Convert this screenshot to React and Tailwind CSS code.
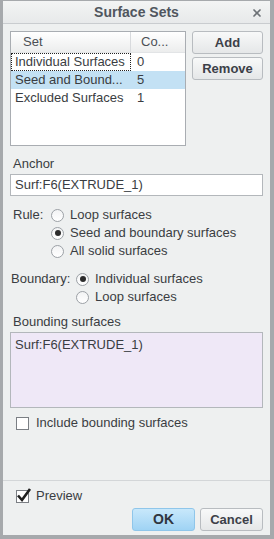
import { X } from "lucide-react";

const font = { fontFamily: '"Liberation Sans", Arial, sans-serif' };

function Radio({ checked, label }) {
  return (
    <div className="flex items-center gap-[6px] h-[18px]">
      <span className="w-[13px] h-[13px] rounded-full border border-[#9ca1a6] bg-gradient-to-b from-[#f2f3f4] to-white flex items-center justify-center">
        {checked && <span className="w-[6px] h-[6px] rounded-full bg-[#2b2b2b]" />}
      </span>
      <span>{label}</span>
    </div>
  );
}

function Check({ checked, label }) {
  return (
    <div className="flex items-center gap-[7px] h-[18px]">
      <span className="relative w-[13px] h-[13px] border border-[#7b7f84] bg-white">
        {checked && (
          <svg className="absolute -left-[1px] -top-[4px]" width="16" height="16" viewBox="0 0 16 16">
            <path d="M2 8.5 L6 13 L14 2" fill="none" stroke="#1f1f1f" strokeWidth="2.6" />
          </svg>
        )}
      </span>
      <span>{label}</span>
    </div>
  );
}

export default function App() {
  const rows = [
    { name: "Individual Surfaces", count: "0", focus: true },
    { name: "Seed and Bound...", count: "5", selected: true },
    { name: "Excluded Surfaces", count: "1" },
  ];

  return (
    <div
      style={font}
      className="w-[274px] h-[539px] bg-[#a6a9ac] pl-[3px] pr-[4px] pb-[4px] pt-[1px] text-[13px] text-[#3a3d42]"
    >
      <div className="h-full flex flex-col bg-[#eef0f0]">
        {/* TITLE */}
        <div className="relative h-[23px] shrink-0 flex items-center justify-center bg-gradient-to-b from-[#f3f4f4] to-[#e7e9ea] border-b border-[#c9cccf]">
          <span className="text-[14px] font-bold text-[#50565e]">Surface Sets</span>
          <X className="absolute right-[7px] top-[6px] text-[#6c7176]" size={12} strokeWidth={3.4} />
        </div>

        <div className="flex-1 flex flex-col px-[7px] pt-[7px]">
          {/* LIST + BUTTONS */}
          <div className="flex gap-[6px]">
            <div className="w-[176px] h-[115px] border border-[#a9adb2] bg-white flex flex-col">
              <div className="flex h-[21px] bg-gradient-to-b from-white to-[#eceded] border-b border-[#e2e4e6] text-[#4b4f55]">
                <div className="w-[120px] pl-[12px] flex items-center border-r border-[#d8dadd]">Set</div>
                <div className="pl-[10px] flex items-center">Co...</div>
              </div>
              {rows.map((r) => (
                <div key={r.name} className={`flex h-[18px] items-center ${r.selected ? "bg-[#c3e1f4]" : ""}`}>
                  <div className={`w-[120px] pl-[4px] h-full flex items-center ${r.focus ? "outline outline-1 outline-dotted outline-[#222] -outline-offset-1" : ""}`}>
                    {r.name}
                  </div>
                  <div className="pl-[6px]">{r.count}</div>
                </div>
              ))}
            </div>
            <div className="flex flex-col gap-[3px] w-[71px]">
              <button className="h-[23px] rounded-[3px] border border-[#b8bcc0] bg-gradient-to-b from-[#f8f9f9] to-[#e5e7e8] font-bold text-[13px] text-[#3c4048]">
                Add
              </button>
              <button className="h-[23px] rounded-[3px] border border-[#b8bcc0] bg-gradient-to-b from-[#f8f9f9] to-[#e5e7e8] font-bold text-[13px] text-[#3c4048]">
                Remove
              </button>
            </div>
          </div>

          {/* ANCHOR */}
          <div className="mt-[10px] ml-[3px] h-[16px] flex items-center">Anchor</div>
          <div className="mt-[2px] h-[22px] border border-[#b3b7bb] bg-white flex items-center pl-[4px]">
            Surf:F6(EXTRUDE_1)
          </div>

          {/* RULE */}
          <div className="mt-[10px] flex">
            <div className="w-[41px] pl-[3px] h-[18px] flex items-center">Rule:</div>
            <div className="flex flex-col">
              <Radio label="Loop surfaces" />
              <Radio checked label="Seed and boundary surfaces" />
              <Radio label="All solid surfaces" />
            </div>
          </div>

          {/* BOUNDARY */}
          <div className="mt-[10px] flex">
            <div className="w-[66px] pl-[1px] h-[18px] flex items-center">Boundary:</div>
            <div className="flex flex-col">
              <Radio checked label="Individual surfaces" />
              <Radio label="Loop surfaces" />
            </div>
          </div>

          {/* BOUNDING */}
          <div className="mt-[8px] ml-[3px] h-[16px] flex items-center">Bounding surfaces</div>
          <div className="mt-[2px] h-[76px] border border-[#b3b7bb] bg-[#efe8f7] pl-[4px] pt-[2px]">
            Surf:F6(EXTRUDE_1)
          </div>
          <div className="mt-[6px] ml-[6px]">
            <Check label="Include bounding surfaces" />
          </div>
        </div>

        {/* FOOTER */}
        <div className="shrink-0 border-t border-[#d3d6d8] px-[7px] pt-[6px] pb-[4px]">
          <div className="ml-[6px]">
            <Check checked label="Preview" />
          </div>
          <div className="mt-[3px] flex justify-end gap-[5px]">
            <button className="w-[63px] h-[23px] rounded-[3px] border border-[#8fc6ea] bg-gradient-to-b from-[#c8e8fb] to-[#9fd3f4] font-bold text-[14px] text-[#2f3540]">
              OK
            </button>
            <button className="w-[63px] h-[23px] rounded-[3px] border border-[#b8bcc0] bg-gradient-to-b from-[#f8f9f9] to-[#e5e7e8] font-bold text-[13px] text-[#3c4048]">
              Cancel
            </button>
          </div>
        </div>
      </div>
    </div>
  );
}
